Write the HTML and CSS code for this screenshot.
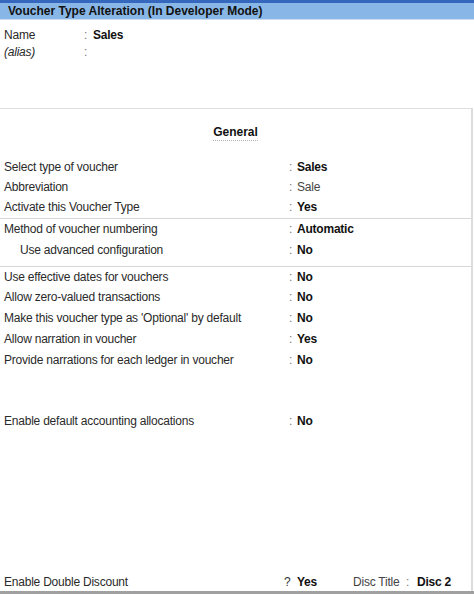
FILE: index.html
```html
<!DOCTYPE html>
<html>
<head>
<meta charset="utf-8">
<link rel="stylesheet" href="styles.css">
</head>
<body>
<div class="screen">
  <div class="topstrip"></div>
  <div class="titlebar">Voucher Type Alteration (In Developer Mode)</div>
  <div class="header">
    <div class="hrow"><span class="hlabel">Name</span><span class="hcolon">:</span><span class="val">Sales</span></div>
    <div class="hrow"><span class="hlabel alias">(alias)</span><span class="hcolon">:</span><span></span></div>
  </div>
  <div class="panel">
    <div class="heading"><span>General</span></div>
    <div class="group g1">
      <div class="row"><span class="label">Select type of voucher</span><span class="colon">:</span><span class="val">Sales</span></div>
      <div class="row"><span class="label">Abbreviation</span><span class="colon">:</span><span class="val plain">Sale</span></div>
      <div class="row"><span class="label">Activate this Voucher Type</span><span class="colon">:</span><span class="val">Yes</span></div>
    </div>
    <div class="group g2">
      <div class="row"><span class="label">Method of voucher numbering</span><span class="colon">:</span><span class="val">Automatic</span></div>
      <div class="row"><span class="label indent">Use advanced configuration</span><span class="colon">:</span><span class="val">No</span></div>
    </div>
    <div class="group g3">
      <div class="row"><span class="label">Use effective dates for vouchers</span><span class="colon">:</span><span class="val">No</span></div>
      <div class="row"><span class="label">Allow zero-valued transactions</span><span class="colon">:</span><span class="val">No</span></div>
      <div class="row"><span class="label">Make this voucher type as 'Optional' by default</span><span class="colon">:</span><span class="val">No</span></div>
      <div class="row"><span class="label">Allow narration in voucher</span><span class="colon">:</span><span class="val">Yes</span></div>
      <div class="row"><span class="label">Provide narrations for each ledger in voucher</span><span class="colon">:</span><span class="val">No</span></div>
    </div>
    <div class="group g4">
      <div class="row"><span class="label">Enable default accounting allocations</span><span class="colon">:</span><span class="val">No</span></div>
    </div>
    <div class="bottomrow">
      <span class="blabel">Enable Double Discount</span>
      <span class="qmark">?</span>
      <span class="val byes">Yes</span>
      <span class="disclabel">Disc Title</span>
      <span class="dcolon">:</span>
      <span class="val">Disc 2</span>
    </div>
  </div>
  <div class="bottombar"></div>
</div>
</body>
</html>
```
FILE: styles.css
```css
html, body {
  margin: 0;
  padding: 0;
  background: #ffffff;
}
.screen {
  width: 474px;
  height: 594px;
  display: flex;
  flex-direction: column;
  font-family: "Liberation Sans", Arial, sans-serif;
  font-size: 12px;
  letter-spacing: -0.22px;
  color: #2a2a2a;
  overflow: hidden;
}
.topstrip {
  height: 3px;
  background: #3567bd;
}
.titlebar {
  height: 16px;
  line-height: 16px;
  background: #88b6e6;
  border-bottom: 1px solid #c9dcf0;
  padding-left: 8px;
  font-weight: bold;
  font-size: 12px;
  letter-spacing: 0;
  color: #111;
}
.header {
  padding-top: 7px;
  height: 81px;
}
.hrow {
  display: grid;
  grid-template-columns: 80px 9px 1fr;
  padding-left: 4px;
  height: 17px;
  line-height: 17px;
}
.hcolon, .colon, .dcolon, .qmark {
  color: #777;
}
.alias {
  font-style: italic;
}
.val {
  font-weight: bold;
  color: #111;
}
.val.plain {
  font-weight: normal;
  color: #444;
}
.panel {
  flex: 1;
  width: 471px;
  border-top: 1px solid #dedede;
  border-right: 2px solid #dcdcdc;
  display: flex;
  flex-direction: column;
}
.heading {
  text-align: center;
  padding-top: 16px;
  height: 29px;
  font-weight: bold;
  color: #111;
  letter-spacing: 0;
}
.heading span {
  display: inline-block;
  padding-bottom: 1px;
  border-bottom: 1px dotted #b0b0b0;
}
.group {
  display: flex;
  flex-direction: column;
}
.row {
  display: grid;
  grid-template-columns: 285px 8px 1fr;
  padding-left: 4px;
  height: 20.8px;
  line-height: 20.8px;
}
.indent {
  padding-left: 16px;
}
.g1 {
  padding-top: 3px;
  padding-bottom: 1px;
  border-bottom: 1px solid #d6d6d6;
}
.g1 .row {
  height: 20px;
  line-height: 20px;
}
.g2 {
  padding-bottom: 5px;
  border-bottom: 1px solid #d6d6d6;
}
.g4 {
  padding-top: 40px;
}
.bottomrow {
  margin-top: auto;
  display: flex;
  padding-left: 4px;
  height: 18px;
  line-height: 18px;
}
.blabel {
  width: 280px;
  flex: none;
}
.qmark {
  width: 13px;
  flex: none;
  color: #333;
}
.byes {
  width: 56px;
  flex: none;
}
.disclabel {
  width: 53px;
  flex: none;
  color: #444;
}
.dcolon {
  width: 11px;
  flex: none;
}
.bottombar {
  height: 3px;
  background: #a0a0a0;
}
```
